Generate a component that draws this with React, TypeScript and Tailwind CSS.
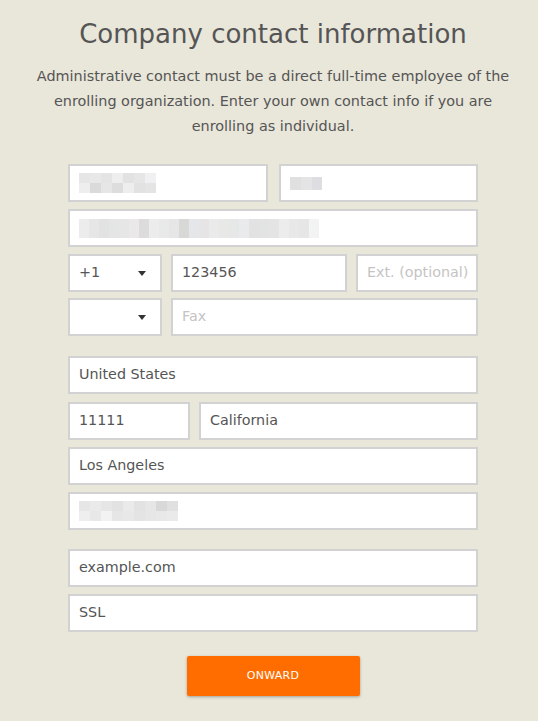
import React from "react";

const font = { fontFamily: '"DejaVu Sans", "Open Sans", sans-serif' };

const Blur = ({ cells }: { cells: string[][] }) => (
  <div className="flex flex-col">
    {cells.map((row, i) => (
      <div key={i} className="flex">
        {row.map((c, j) => (
          <div key={j} className="h-[10px] w-[11px]" style={{ background: c }} />
        ))}
      </div>
    ))}
  </div>
);

const Field = ({
  value,
  placeholder,
  className = "",
  children,
}: {
  value?: string;
  placeholder?: string;
  className?: string;
  children?: React.ReactNode;
}) => (
  <div
    className={`h-[38px] border-2 border-[#d2d2d2] bg-white flex items-center pl-[9px] text-[14.3px] ${className}`}
  >
    {children ??
      (value ? (
        <span className="text-[#555]">{value}</span>
      ) : (
        <span className="text-[#c4c4c4]">{placeholder}</span>
      ))}
  </div>
);

const Select = ({ value }: { value?: string }) => (
  <div className="h-[38px] w-[94px] border-2 border-[#d2d2d2] bg-white flex items-center justify-between pl-[9px] pr-[8px] text-[14.3px] text-[#555]">
    <span>{value ?? ""}</span>
    <span className="w-0 h-0 border-l-[4px] border-r-[4px] border-t-[5px] border-l-transparent border-r-transparent border-t-[#333] mr-[6px]" />
  </div>
);

export default function App() {
  return (
    <div className="min-h-screen w-full bg-[#e9e6da] pl-[8px]" style={font}>
      <div className="flex flex-col items-center pt-[17px]">
        <h1 className="text-[26px] text-[#555] leading-[34px]">
          Company contact information
        </h1>
        <p className="mt-[13px] w-[482px] text-center text-[14.4px] leading-[25px] text-[#555]">
          Administrative contact must be a direct full-time employee of the
          enrolling organization. Enter your own contact info if you are
          enrolling as individual.
        </p>
      </div>

      <div className="ml-[60px] mt-[25px] w-[410px] flex flex-col">
        <div className="flex gap-[11px]">
          <Field className="w-[200px]">
            <Blur
              cells={[
                ["#e6e6e6", "#e8e8e8", "#e4e4e4", "#eeeeee", "#e2e2e2", "#e6e6e6", "#f0f0f2"],
                ["#eeeeee", "#dadada", "#e6e6e6", "#dddddd", "#eeeeee", "#e2e2e2", "#e4e4e4"],
              ]}
            />
          </Field>
          <Field className="flex-1">
            <div className="flex h-[13px]">
              <div className="w-[11px] bg-[#e0e0e0]" />
              <div className="w-[11px] bg-[#e4e4e4]" />
              <div className="w-[10px] bg-[#dedee2]" />
            </div>
          </Field>
        </div>

        <Field className="mt-[7px]">
          <div className="flex h-[19px]">
            {["#ececec", "#e6e6e6", "#e2e2e2", "#e4e6e6", "#e6e6e6", "#eae8e8", "#dcdcdc", "#ececec", "#e8eaea", "#e6e6e6", "#d8d8d6", "#e4e6ea", "#e6e4e4", "#eaeaea", "#e8e8e6", "#e6e8e8", "#e8eaec", "#e2e2e2", "#e2e4e4", "#e4e4e4", "#ececec", "#e8e8e8", "#e6e6e6", "#f2f4f4"].map(
              (c, i) => (
                <div key={i} className="w-[10px]" style={{ background: c }} />
              )
            )}
          </div>
        </Field>

        <div className="mt-[7px] flex gap-[9px]">
          <Select value="+1" />
          <Field value="123456" className="w-[176px]" />
          <Field placeholder="Ext. (optional)" className="flex-1" />
        </div>

        <div className="mt-[6px] flex gap-[9px]">
          <Select />
          <Field placeholder="Fax" className="flex-1" />
        </div>

        <Field value="United States" className="mt-[20px]" />

        <div className="mt-[8px] flex gap-[9px]">
          <Field value="11111" className="w-[122px]" />
          <Field value="California" className="flex-1" />
        </div>

        <Field value="Los Angeles" className="mt-[7px]" />

        <Field className="mt-[7px]">
          <Blur
            cells={[
              ["#e6e6e6", "#eaeaea", "#e6e6e6", "#e2e2e2", "#eaeaea", "#e2e2e2", "#e6e6e6", "#d8d8d8", "#e0e0e0"],
              ["#eeeeee", "#e8e8e8", "#f2f2f2", "#e6e6e6", "#e8e8e8", "#e4e4e4", "#e6e6e6", "#e8e8e8", "#eaeaea"],
            ]}
          />
        </Field>

        <Field value="example.com" className="mt-[19px]" />
        <Field value="SSL" className="mt-[7px]" />

        <div className="mt-[24px] flex justify-center">
          <button className="h-[40px] w-[173px] rounded-[2px] bg-[#ff6d00] text-white text-[11px] tracking-[0.3px] shadow-[0_1px_3px_rgba(0,0,0,0.3)]">
            ONWARD
          </button>
        </div>
      </div>
    </div>
  );
}
